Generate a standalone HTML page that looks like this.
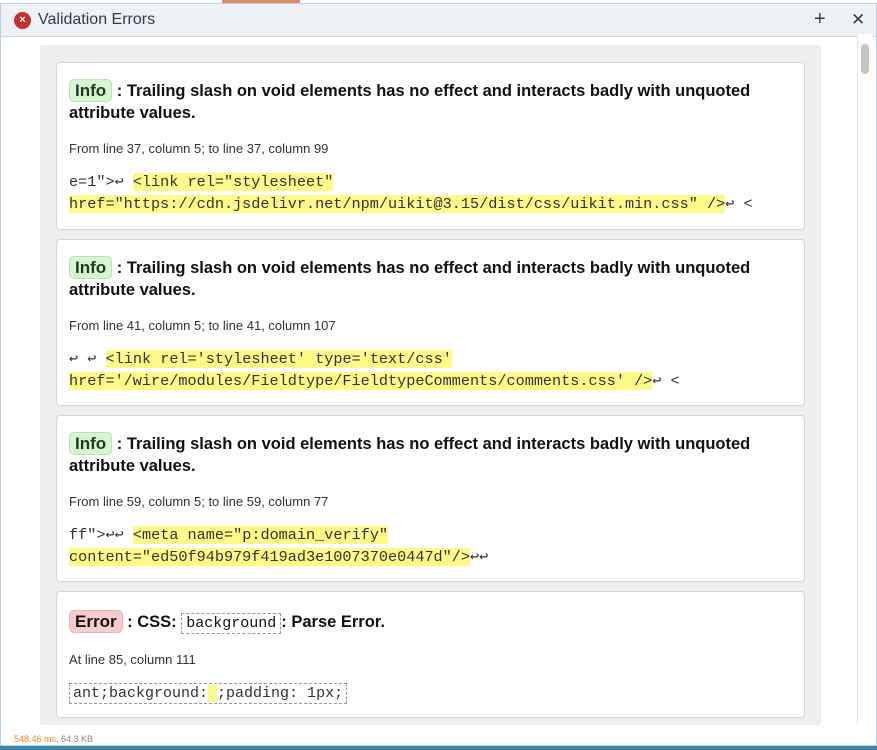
<!DOCTYPE html>
<html><head><meta charset="utf-8"><style>
*{margin:0;padding:0;box-sizing:border-box}
body{width:877px;height:750px;overflow:hidden;background:#3a87a8;font-family:"Liberation Sans",Arial,sans-serif;position:relative}
.topbg{position:absolute;left:0;top:0;width:877px;height:4px;background:#fff}
.org{position:absolute;left:222px;top:0;width:78px;height:4px;background:#e08a62}
.win{position:absolute;left:0;top:3px;width:877px;height:743px;background:#fff;border:1px solid #b9d3e6}
.hdr{position:absolute;left:0;top:0;width:875px;height:33px;background:#eef1f6;border-bottom:1px solid #cfd8e3}
.hdr .ic{position:absolute;left:13px;top:8px;width:17px;height:17px;border-radius:50%;background:#c8302a;color:#fff;font-size:11px;font-weight:bold;text-align:center;line-height:17px}
.hdr .t{position:absolute;left:37px;top:7px;font-size:16px;color:#333d4a}
.hdr .p{position:absolute;left:813px;top:4px;font-size:20px;color:#333d4a}
.hdr .x{position:absolute;left:850px;top:6px;font-size:17px;color:#333d4a}
.panel{position:absolute;left:40px;top:45px;width:781px;height:680px;background:#eeeeee;border-radius:3px}
.sb{position:absolute;left:857px;top:34px;width:15px;height:690px;border-left:1px solid #e6e6e6;background:#fff}
.thumb{position:absolute;left:861px;top:44px;width:8px;height:30px;background:#c4c4c4;border-radius:4px}
.card{position:absolute;left:56px;width:749px;background:#fff;border:1px solid #d4d4d4;border-radius:4px;padding:0 12px}
h3{position:absolute;left:12px;top:16px;width:720px;font-size:16.5px;line-height:22px;font-weight:bold;color:#111}
.b{display:inline-block;padding:0 5px;border-radius:5px;line-height:21px;font-weight:bold;font-size:17px}
.info{background:#d7f5d0;border:1px solid #b8e4b0;color:#1c3d1c}
.err{background:#f7cccc;border:1px solid #e8b5b5;color:#111}
.loc{position:absolute;left:12px;font-size:13px;color:#333}
.code{position:absolute;left:12px;font-family:"Liberation Mono",monospace;font-size:15.2px;line-height:22px;color:#333;width:730px}
.hl{background:#fdfa88}
.dash{border:1px dashed #999;padding:1px 4px;font-family:"Liberation Mono",monospace;font-weight:normal;font-size:15px}
.ft{position:absolute;left:14px;top:734px;font-size:9px;color:#888}
.ft span{color:#f08a2c}
</style></head><body>
<div class="topbg"></div><div class="org"></div>
<div class="win">
<div class="hdr"><div class="ic">×</div><div class="t">Validation Errors</div><div class="p">+</div><div class="x">✕</div></div>
</div>
<div class="panel"></div>
<div class="sb"></div><div class="thumb"></div>

<div class="card" style="top:62px;height:168px">
<h3><span class="b info">Info</span> : Trailing slash on void elements has no effect and interacts badly with unquoted attribute values.</h3>
<div class="loc" style="top:78px">From line 37, column 5; to line 37, column 99</div>
<div class="code" style="top:108px">e=1"&gt;↩ <span class="hl">&lt;link rel="stylesheet"<br>href="https://cdn.jsdelivr.net/npm/uikit@3.15/dist/css/uikit.min.css" /&gt;</span>↩ &lt;</div>
</div>

<div class="card" style="top:239px;height:167px">
<h3><span class="b info">Info</span> : Trailing slash on void elements has no effect and interacts badly with unquoted attribute values.</h3>
<div class="loc" style="top:78px">From line 41, column 5; to line 41, column 107</div>
<div class="code" style="top:108px">↩ ↩ <span class="hl">&lt;link rel='stylesheet' type='text/css'<br>href='/wire/modules/Fieldtype/FieldtypeComments/comments.css' /&gt;</span>↩ &lt;</div>
</div>

<div class="card" style="top:415px;height:167px">
<h3><span class="b info">Info</span> : Trailing slash on void elements has no effect and interacts badly with unquoted attribute values.</h3>
<div class="loc" style="top:78px">From line 59, column 5; to line 59, column 77</div>
<div class="code" style="top:108px">ff"&gt;↩↩ <span class="hl">&lt;meta name="p:domain_verify"<br>content="ed50f94b979f419ad3e1007370e0447d"/&gt;</span>↩↩</div>
</div>

<div class="card" style="top:591px;height:127px">
<h3 style="top:18px"><span class="b err">Error</span> : CSS: <span class="dash">background</span>: Parse Error.</h3>
<div class="loc" style="top:60px">At line 85, column 111</div>
<div class="code" style="top:90px;width:auto"><span class="dash" style="padding:1px 3px">ant;background:<span class="hl"> </span>;padding: 1px;</span></div>
</div>

<div class="ft"><span>548.46 ms</span>, 64.3 KB</div>
</body></html>
